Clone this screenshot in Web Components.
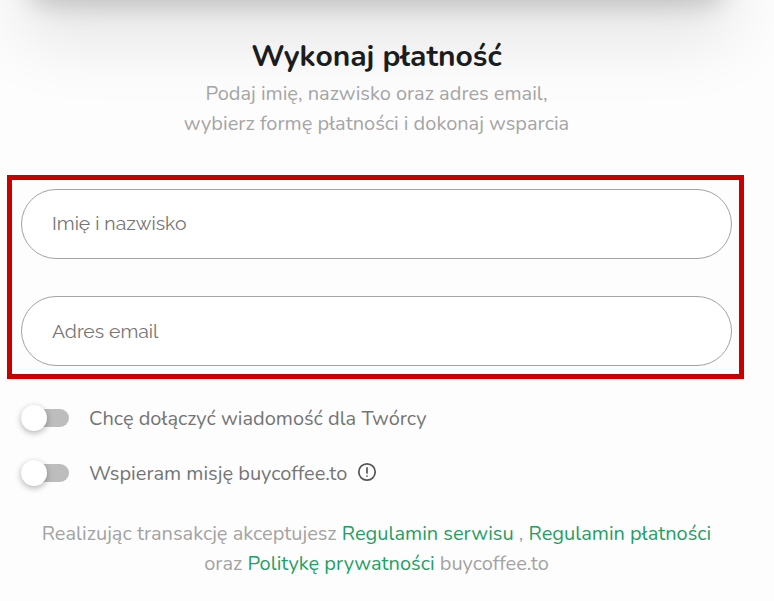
<!DOCTYPE html>
<html lang="pl">
<head>
<meta charset="utf-8">
<title>Wykonaj płatność</title>
<style>
	html { height: 601px; background: #fdfdfd; }
	body { margin: 0; padding-right: 21px; font-family: Nunito, Lato, "Noto Sans", sans-serif; }
</style>
</head>
<body>
<template id="top-card-tpl">
	<style>
		:host { display: block; height: 60px; margin: -60px 28px 0; border-radius: 0 0 24px 24px; background: #ccc; box-shadow: 0 4px 24px 2px rgba(0,0,0,.18), 0 30px 70px 10px rgba(0,0,0,.1); }
	</style>
</template>
<template id="pay-header-tpl">
	<style>
		:host { display: block; text-align: center; padding-top: 38px; }
		h2 { margin: 0; font-size: 30px; line-height: 38px; font-weight: 700; color: #1c1c1c; }
		p { margin: 3px 0 0; font-size: 20px; line-height: 30px; color: #a5a5a5; }
	</style>
	<h2><slot name="title"></slot></h2>
	<p><slot></slot></p>
</template>
<template id="field-box-tpl">
	<style>
		:host { display: flex; flex-direction: column; gap: 37px; margin: 36px 9px 0 7px; padding: 9px 7px 8px 9px; border: 5px solid #c80000; }
	</style>
	<slot></slot>
</template>
<template id="pill-input-tpl">
	<style>
		:host { display: block; }
		input { display: block; box-sizing: border-box; width: 100%; height: 70px; padding: 0 30px var(--nudge, 0); border: 1px solid #a3a3a3; border-radius: 35px; background: #fff; font: 19.4px Raleway, Lato, sans-serif; color: #666; outline: none; }
		input::placeholder { color: #757575; opacity: 1; }
	</style>
	<input type="text">
</template>
<template id="toggle-row-tpl">
	<style>
		:host { display: flex; align-items: center; height: 30px; padding-left: 21px; font-size: 20px; color: #757575; }
		.switch { position: relative; flex: none; width: 48px; height: 18px; margin-right: 20px; border-radius: 9px; background: #bdbdbd; }
		.knob { position: absolute; left: 0; top: -4px; width: 26px; height: 26px; border-radius: 50%; background: #fff; box-shadow: 0 2px 6px rgba(0,0,0,.3); }
		.icon { display: flex; margin: -3px 0 0 10px; }
	</style>
	<div class="switch"><div class="knob"></div></div>
	<span><slot></slot></span>
	<span class="icon"><slot name="icon"></slot></span>
</template>
<template id="terms-note-tpl">
	<style>
		:host { display: block; margin-top: 31px; text-align: center; font-size: 20px; line-height: 30px; color: #a3a3a3; }
		::slotted(a) { color: #1fa065; text-decoration: none; }
	</style>
	<slot></slot>
</template>

<top-card></top-card>
<pay-header>
	<span slot="title">Wykonaj płatność</span>
	Podaj imię, nazwisko oraz adres email,<br>wybierz formę płatności i dokonaj wsparcia
</pay-header>
<field-box>
	<pill-input placeholder="Imię i nazwisko" style="--nudge:2px"></pill-input>
	<pill-input placeholder="Adres email"></pill-input>
</field-box>
<toggle-row style="margin-top:24px">Chcę dołączyć wiadomość dla Twórcy</toggle-row>
<toggle-row style="margin-top:25px">Wspieram misję buycoffee.to
	<svg slot="icon" width="20" height="20" viewBox="0 0 20 20" fill="none" stroke="#555" stroke-width="1.7" stroke-linecap="round"><circle cx="10" cy="10" r="8.2"/><path d="M10 5.8v5.2"/><path d="M10 14v.1"/></svg>
</toggle-row>
<terms-note>Realizując transakcję akceptujesz <a href="#">Regulamin serwisu</a> , <a href="#">Regulamin płatności</a><br>oraz <a href="#">Politykę prywatności</a> buycoffee.to</terms-note>

<script>
	(function() {
		function tpl(name) {
			return document.getElementById(name + '-tpl').content;
		}

		// plain elements, all they do is stamp their template
		['top-card', 'pay-header', 'field-box', 'toggle-row', 'terms-note'].forEach(function(name) {
			customElements.define(name, class extends HTMLElement {
				constructor() {
					super();
					this.attachShadow({mode: 'open'}).appendChild(document.importNode(tpl(name), true));
				}
			});
		});

		class PillInput extends HTMLElement {
			constructor() {
				super();
				const shadow = this.attachShadow({mode: 'open'});
				shadow.appendChild(document.importNode(tpl('pill-input'), true));
				this._input = shadow.querySelector('input');
			}

			connectedCallback() {
				this._input.placeholder = this.getAttribute('placeholder') || '';
			}
		}

		customElements.define('pill-input', PillInput);
	})();
</script>
</body>
</html>
